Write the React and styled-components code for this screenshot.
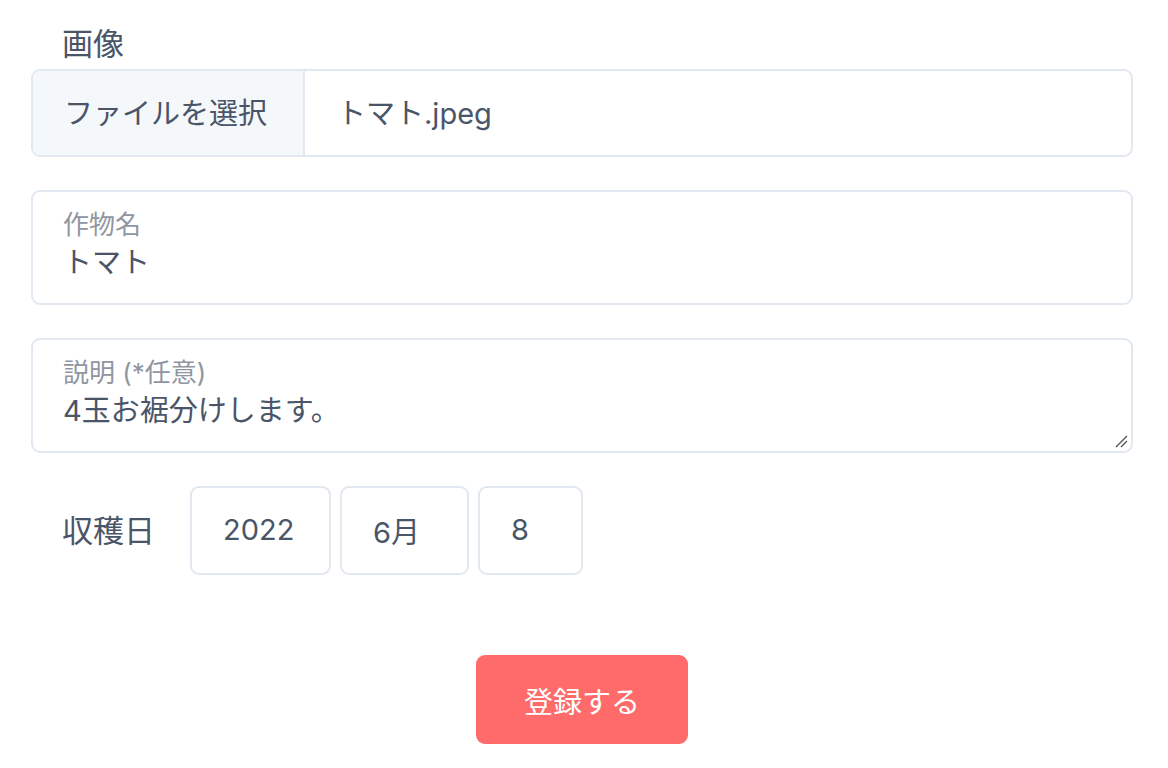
import React from 'react';
import styled, { createGlobalStyle } from 'styled-components';

const GlobalStyle = createGlobalStyle`
  body {
    margin: 0;
    background: #ffffff;
    font-family: "Inter", "Noto Sans CJK JP", sans-serif;
    color: #4a5568;
  }
`;

const Form = styled.form`
  width: 1102px;
  padding: 19px 0 0 31px;
  display: flex;
  flex-direction: column;
`;

const FieldLabel = styled.div`
  font-size: 31px;
  line-height: 50px;
  padding-left: 31px;
`;

const FileBox = styled.div`
  display: flex;
  height: 88px;
  box-sizing: border-box;
  border: 2px solid #e2e8f0;
  border-radius: 9px;
  overflow: hidden;
`;

const FileButton = styled.div`
  width: 272px;
  background: #f5f8fb;
  border-right: 2px solid #e2e8f0;
  display: flex;
  align-items: center;
  padding: 0 0 4px 31px;
  box-sizing: border-box;
  font-size: 29px;
`;

const FileName = styled.div`
  display: flex;
  align-items: center;
  padding: 0 0 4px 32px;
  font-size: 29px;
`;

const FloatBox = styled.div`
  margin-top: 33px;
  height: 115px;
  box-sizing: border-box;
  border: 2px solid #e2e8f0;
  border-radius: 9px;
  padding: 16px 0 0 30px;
  position: relative;
`;

const FloatLabel = styled.div`
  font-size: 26px;
  line-height: 33px;
  color: #8f96a1;
`;

const FloatValue = styled.div`
  margin-top: 3px;
  font-size: 29px;
  line-height: 38px;
`;

const Grip = styled.svg`
  position: absolute;
  right: 3px;
  bottom: 3px;
`;

const DateRow = styled.div`
  margin-top: 33px;
  display: flex;
  align-items: center;
  gap: 9px;
`;

const DateLabel = styled.div`
  font-size: 31px;
  padding: 0 0 4px 31px;
  width: 150px;
  box-sizing: border-box;
`;

const DateBox = styled.div`
  width: ${(p) => p.w}px;
  height: 89px;
  box-sizing: border-box;
  border: 2px solid #e2e8f0;
  border-radius: 9px;
  display: flex;
  align-items: center;
  padding: 0 0 2px 31px;
  font-size: 29px;
`;

const Actions = styled.div`
  display: flex;
  justify-content: center;
  margin-top: 80px;
`;

const Submit = styled.button`
  width: 212px;
  height: 89px;
  border: none;
  border-radius: 9px;
  background: #ff6b6b;
  color: #ffffff;
  font-family: "Inter", "Noto Sans CJK JP", sans-serif;
  font-size: 29px;
`;

export default function App() {
  return (
    <>
      <GlobalStyle />
      <Form onSubmit={(e) => e.preventDefault()}>
        <FieldLabel>画像</FieldLabel>
        <FileBox>
          <FileButton>ファイルを選択</FileButton>
          <FileName>トマト.jpeg</FileName>
        </FileBox>

        <FloatBox>
          <FloatLabel>作物名</FloatLabel>
          <FloatValue>トマト</FloatValue>
        </FloatBox>

        <FloatBox>
          <FloatLabel>説明 (*任意)</FloatLabel>
          <FloatValue>4玉お裾分けします。</FloatValue>
          <Grip width="14" height="14" viewBox="0 0 14 14">
            <path d="M2 13 L13 2 M7 13 L13 7" stroke="#555" strokeWidth="1.4" />
          </Grip>
        </FloatBox>

        <DateRow>
          <DateLabel>収穫日</DateLabel>
          <DateBox w={141}>2022</DateBox>
          <DateBox w={129}>6月</DateBox>
          <DateBox w={105}>8</DateBox>
        </DateRow>

        <Actions>
          <Submit type="submit">登録する</Submit>
        </Actions>
      </Form>
    </>
  );
}
